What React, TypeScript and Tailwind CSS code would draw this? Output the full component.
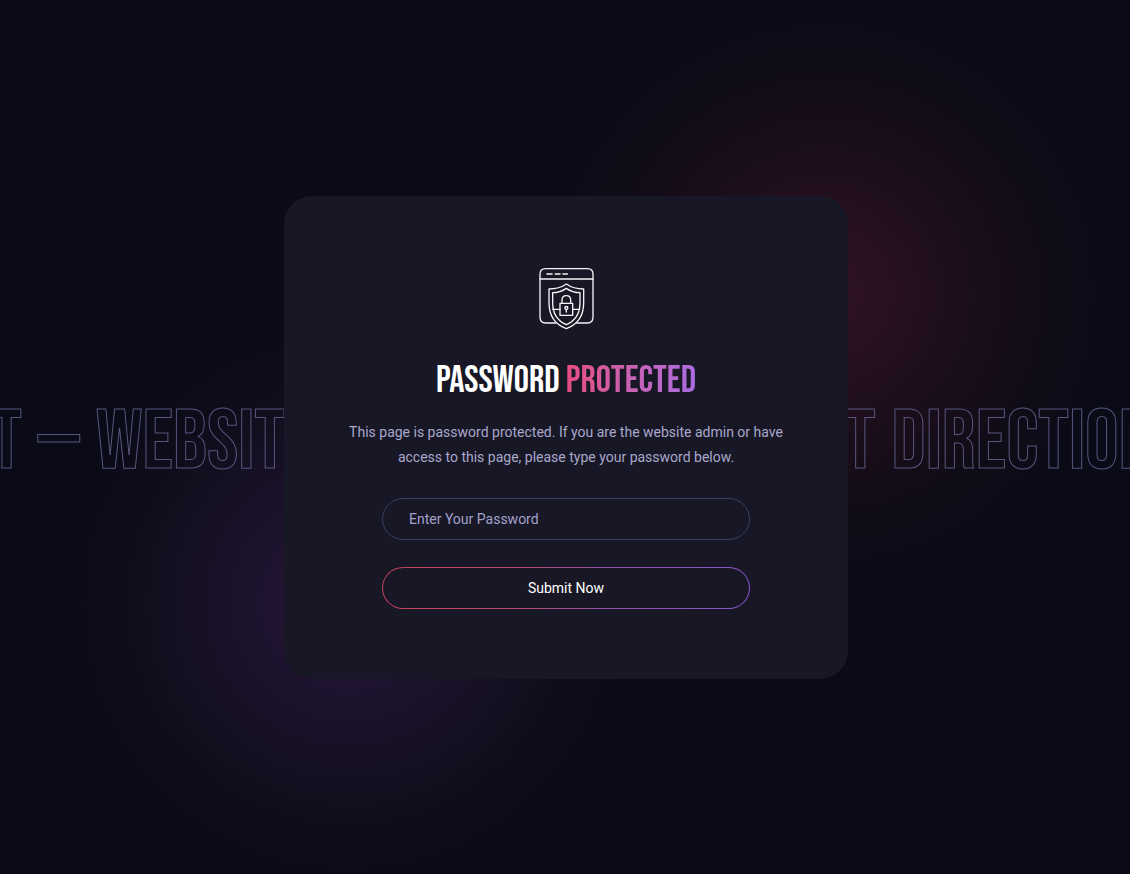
function ShieldIcon() {
  return (
    <svg
      className="h-[62px] w-[55px]"
      viewBox="56 38 165 186"
      fill="none"
      stroke="#f4f4f8"
      strokeWidth="4"
      strokeLinejoin="round"
      strokeLinecap="round"
      aria-hidden="true"
    >
      <path d="M107 203H76Q59 203 59 186V57Q59 40 76 40H201Q218 40 218 57V186Q218 203 201 203H169" />
      <path d="M59 71H218" />
      <path d="M80 56H95M105 56H119M128 56H141" strokeWidth="5" />
      <path d="M138 86Q117 101 86 101V142Q86 200 138 220Q190 200 190 142V101Q159 101 138 86Z" />
      <path d="M138 99Q119 112 97 112V142Q97 190 138 208Q179 190 179 142V112Q157 112 138 99Z" />
      <path d="M97 162H119M157 162H178" />
      <path d="M119 144H157V180H119Z" />
      <path d="M125 144V134Q125 121 138 121Q151 121 151 134V144" />
      <circle cx="138" cy="158" r="4.5" />
      <path d="M138 163V170" />
    </svg>
  );
}

function Backdrop() {
  return (
    <div aria-hidden="true" className="absolute inset-0 overflow-hidden">
      <div className="absolute top-1/2 left-1/2 size-[560px] -translate-y-[424px] -ml-[20px] bg-[radial-gradient(closest-side,#2f1229_0%,#291120_20%,#200f1d_40%,#170d19_62%,#0f0c17_82%,#0b0b1600_100%)]" />
      <div className="absolute top-1/2 right-1/2 size-[560px] -translate-y-[114px] -mr-[64px] bg-[radial-gradient(closest-side,#25163a_0%,#201431_25%,#1a1128_46%,#130f20_66%,#0e0c19_84%,#0b0b1600_100%)]" />
      <div className="absolute inset-0 flex items-center pt-3 font-['Bebas_Neue','Roboto_Condensed',sans-serif] text-[84px] leading-none whitespace-nowrap text-transparent [-webkit-text-stroke:1px_#57567e]">
        <div className="flex min-w-0 flex-1 justify-end gap-4 pr-2">
          <span>T</span>
          <span>—</span>
          <span>Websit</span>
        </div>
        <div className="w-[552px] shrink-0" />
        <div className="flex min-w-0 flex-1 justify-start gap-4">
          <span>T</span>
          <span>Direction</span>
        </div>
      </div>
    </div>
  );
}

export default function App() {
  return (
    <main className="relative flex min-h-screen items-center justify-center overflow-hidden bg-[#0b0b17] pl-0.5 font-['Roboto',sans-serif] text-sm">
      <Backdrop />
      <section className="relative flex w-full max-w-[564px] flex-col items-center rounded-[28px] bg-[#181725] px-14 pt-[72px] pb-[70px] text-center">
        <ShieldIcon />
        <h1 className="mt-[31px] font-['Bebas_Neue','Roboto_Condensed',sans-serif] text-[38px] leading-[40px] font-normal text-white">
          Password{" "}
          <span className="bg-linear-to-r from-[#e64c80] to-[#aa6be2] bg-clip-text text-transparent">Protected</span>
        </h1>
        <p className="mt-[19px] leading-[25px] text-[#a9a8cc]">
          This page is password protected. If you are the website admin or have access to this page, please type your
          password below.
        </p>
        <form className="mt-7 flex w-full max-w-[368px] flex-col gap-[27px]" onSubmit={(e) => e.preventDefault()}>
          <input
            type="password"
            aria-label="Enter Your Password"
            placeholder="Enter Your Password"
            className="h-[42px] w-full rounded-full border border-[#3b3e62] bg-transparent px-[26px] text-white outline-none placeholder:text-[#a3a1cc]"
          />
          <button
            type="submit"
            className="h-[42px] w-full cursor-pointer rounded-full border border-transparent text-white [background:linear-gradient(#181725,#181725)_padding-box,linear-gradient(90deg,#c4425c_0%,#b9466c_35%,#8c52b0_65%,#8a5acb_100%)_border-box]"
          >
            Submit Now
          </button>
        </form>
      </section>
    </main>
  );
}
